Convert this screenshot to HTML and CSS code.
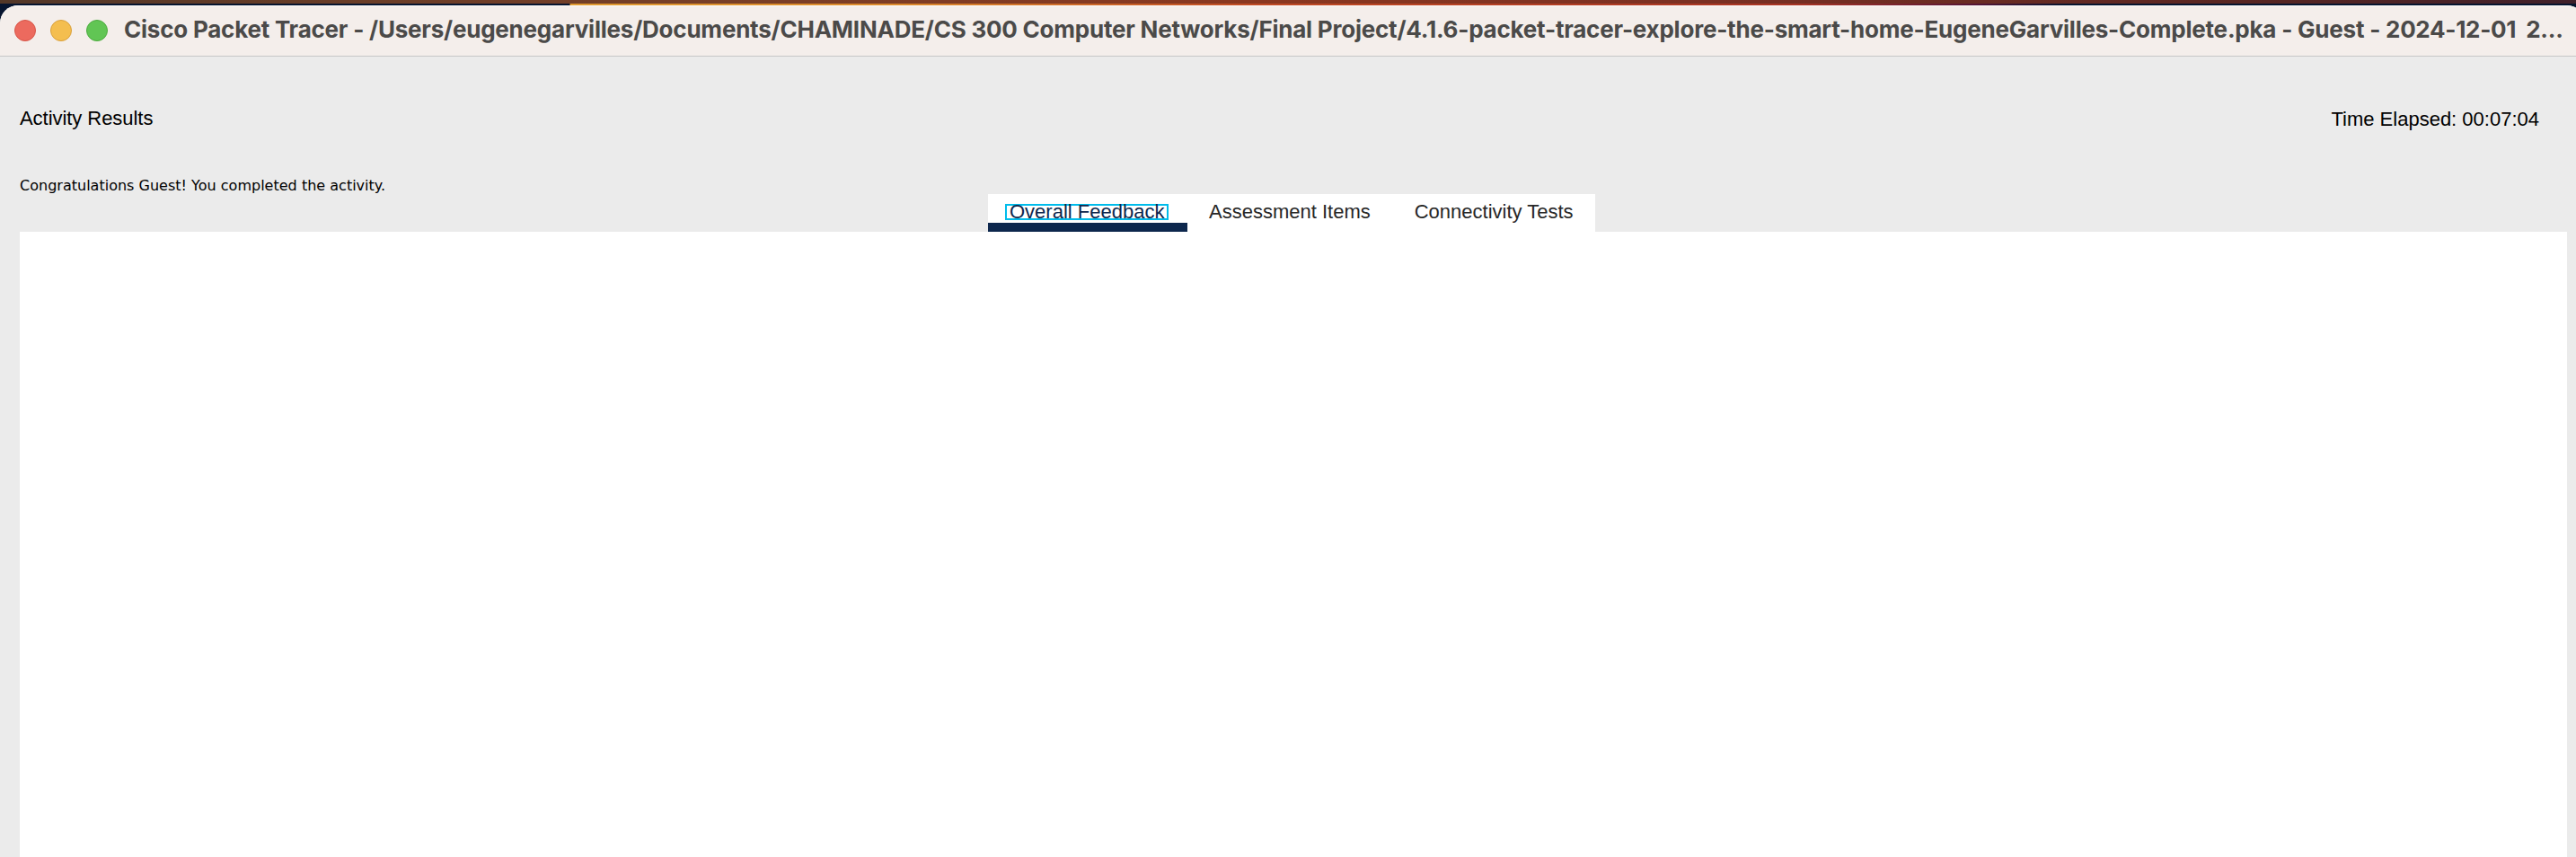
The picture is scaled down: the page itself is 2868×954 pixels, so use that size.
FILE: index.html
```html
<!DOCTYPE html>
<html lang="en">
<head>
<meta charset="utf-8">
<title>Activity Results</title>
<link rel="stylesheet" href="styles.css">
</head>
<body>
<div class="desktop">
  <div class="desktop-strip"></div>
  <div class="desktop-edge"></div>
</div>
<div class="window">
  <header class="titlebar">
    <span class="light close"></span>
    <span class="light minimize"></span>
    <span class="light zoom"></span>
    <h1 class="title">Cisco Packet Tracer - /Users/eugenegarvilles/Documents/CHAMINADE/CS 300 Computer Networks/Final Project/4.1.6-packet-tracer-explore-the-smart-home-EugeneGarvilles-Complete.pka - Guest - <span class="date">2024-12-01</span> <span class="time">2...</span></h1>
  </header>
  <main class="content">
    <div class="summary">
      <span class="heading">Activity Results</span>
      <span class="elapsed">Time Elapsed: 00:07:04</span>
    </div>
    <p class="message">Congratulations Guest! You completed the activity.</p>
    <nav class="tabs">
      <a class="tab active"><span class="focus">Overall Feedback</span></a>
      <a class="tab">Assessment Items</a>
      <a class="tab">Connectivity Tests</a>
    </nav>
    <section class="panel"></section>
  </main>
</div>
</body>
</html>
```
FILE: styles.css
```css
* { box-sizing: border-box; }
body {
  margin: 0;
  height: 954px;
  overflow: hidden;
  display: flex;
  flex-direction: column;
  background: #06142f;
  font-family: "Liberation Sans", Arial, sans-serif;
}
.desktop { flex: none; }
.desktop-strip {
  height: 4px;
  background: linear-gradient(90deg, #523728 0, #6a3d27 400px, #783f27 800px, #8b3820 1400px, #7b3023 1900px, #582622 2500px, #40202a 2868px);
}
.desktop-edge {
  height: 2px;
  background: linear-gradient(90deg, #06142f 0, #06142f 634px, #e09a30 635px, #dc8a2c 1000px, #c04a24 1400px, #a83424 2000px, #551535 2200px, #06142f 2300px);
}
/* The window runs past the right edge of the screen. */
.window {
  flex: 1;
  display: flex;
  flex-direction: column;
  margin-right: -10px;
  border-radius: 20px 20px 0 0;
  overflow: hidden;
  background: #ebebeb;
}
.titlebar {
  flex: none;
  height: 57px;
  display: flex;
  align-items: center;
  padding: 0 0 1px 16px;
  background: #f4eeeb;
  border-top: 1px solid #fff;
  border-bottom: 1px solid #c6c6c6;
}
.light {
  flex: none;
  width: 24px;
  height: 24px;
  margin-right: 16px;
  border-radius: 50%;
  border: 1px solid;
}
.close { background: #ec6a5e; border-color: #d65548; }
.minimize { background: #f4be4f; border-color: #d9a03c; }
.zoom { background: #61c554; border-color: #4dab40; }
.title {
  margin: -2px 0 0 2px;
  font: 700 26px/32px Inter, sans-serif;
  letter-spacing: -0.22px;
  color: #4b4a49;
  white-space: nowrap;
}
.date { letter-spacing: -0.3px; }
.time { margin-left: 5px; }
.content {
  flex: 1;
  display: flex;
  flex-direction: column;
  padding: 52px 20px 0 22px;
}
.summary {
  display: flex;
  justify-content: space-between;
  padding-right: 31px;
  height: 36px;
  font-size: 22px;
  line-height: 34px;
  color: #000;
}
.heading { letter-spacing: -0.05px; }
.elapsed { padding-top: 1px; }
.message {
  margin: 45px 0 0;
  height: 20px;
  font: 16px/21px "DejaVu Sans", Verdana, sans-serif;
  letter-spacing: 0.01px;
  color: #000;
}
.tabs {
  align-self: flex-start;
  display: flex;
  width: 676px;
  height: 42px;
  margin-left: 1078px;
  background: #fff;
  font-size: 22px;
  line-height: 26px;
  color: #272727;
  white-space: nowrap;
}
.tab { padding: 7px 0 0 24px; }
.tab + .tab + .tab { padding-left: 49px; }
.active {
  width: 222px;
  padding: 11px 0 0 19px;
  border-bottom: 10px solid #0d274d;
  color: #0d274d;
}
.focus {
  display: flex;
  align-items: center;
  width: 182px;
  height: 18px;
  padding-left: 3px;
  border: 2px solid #00bceb;
}
.panel { flex: 1; background: #fff; }
```
